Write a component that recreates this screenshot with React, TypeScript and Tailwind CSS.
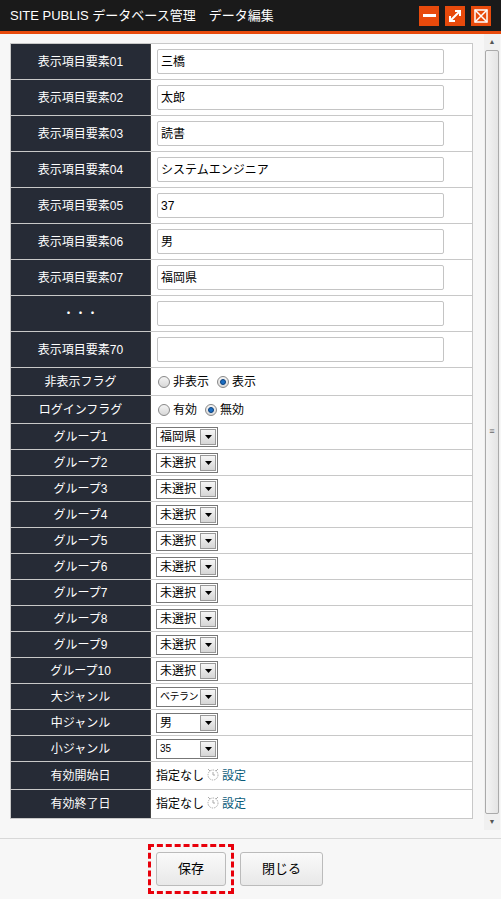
const font = { fontFamily: '"Liberation Sans", "Noto Sans CJK JP", sans-serif' };

const textRows: [string, string][] = [
  ['表示項目要素01', '三橋'],
  ['表示項目要素02', '太郎'],
  ['表示項目要素03', '読書'],
  ['表示項目要素04', 'システムエンジニア'],
  ['表示項目要素05', '37'],
  ['表示項目要素06', '男'],
  ['表示項目要素07', '福岡県'],
  ['・・・', ''],
  ['表示項目要素70', ''],
];

const selectRows: [string, string][] = [
  ['グループ1', '福岡県'],
  ['グループ2', '未選択'],
  ['グループ3', '未選択'],
  ['グループ4', '未選択'],
  ['グループ5', '未選択'],
  ['グループ6', '未選択'],
  ['グループ7', '未選択'],
  ['グループ8', '未選択'],
  ['グループ9', '未選択'],
  ['グループ10', '未選択'],
  ['大ジャンル', 'ベテラン'],
  ['中ジャンル', '男'],
  ['小ジャンル', '35'],
];

function Label({ children }: { children: React.ReactNode }) {
  return (
    <div className="w-[140px] shrink-0 bg-[#262b36] text-white text-[12px] flex items-center justify-center border-r border-[#444]">
      {children}
    </div>
  );
}

function Radio({ on }: { on?: boolean }) {
  return (
    <span className="inline-flex w-[12px] h-[12px] rounded-full border border-[#888] bg-gradient-to-b from-[#f4f4f4] to-[#d8d8d8] items-center justify-center mr-[3px]">
      {on && <span className="w-[6px] h-[6px] rounded-full bg-[#1b6fc4] border border-[#0b3e7a]" />}
    </span>
  );
}

function Select({ value }: { value: string }) {
  const size = value === '35' ? 'text-[10px]' : value === 'ベテラン' ? 'text-[10px] tracking-[-0.5px]' : '';
  return (
    <div className="w-[62px] h-[20px] border border-[#777] bg-white flex items-center text-[12px] text-black">
      <span className={`flex-1 pl-[3px] overflow-hidden whitespace-nowrap ${size}`}>{value}</span>
      <span className="w-[16px] h-[16px] mr-[1px] bg-gradient-to-b from-[#f6f6f6] to-[#d6d6d6] border border-[#999] flex items-center justify-center">
        <svg width="7" height="4" viewBox="0 0 7 4"><path d="M0 0h7L3.5 4z" fill="#000" /></svg>
      </span>
    </div>
  );
}

function DateCell() {
  return (
    <div className="flex items-center pl-[5px] text-[12px] text-black">
      指定なし
      <svg width="16" height="16" viewBox="0 0 16 16" className="mx-[1px] -mt-[4px]">
        <circle cx="8" cy="9" r="5" fill="none" stroke="#aaa" strokeWidth="1" strokeDasharray="1.5 1" />
        <path d="M8 6v3h2M3 3l2 2M13 3l-2 2" stroke="#aaa" fill="none" />
      </svg>
      <span className="text-[#0b5c7a]">設定</span>
    </div>
  );
}

export default function App() {
  return (
    <div style={font} className="w-[501px] h-[899px] bg-[#f7f7f7] flex flex-col overflow-hidden">
      <div className="h-[31px] bg-[#1a1a1a] flex items-center px-[10px] shrink-0">
        <span className="text-white text-[13px] flex-1">SITE PUBLIS データベース管理　データ編集</span>
        <div className="flex gap-[6px]">
          <span className="w-[20px] h-[20px] bg-[#e84a0c] flex items-center justify-center">
            <span className="w-[13px] h-[3px] bg-white" />
          </span>
          <span className="w-[20px] h-[20px] bg-[#e84a0c] flex items-center justify-center">
            <svg width="14" height="14" viewBox="0 0 14 14"><path d="M2 12L12 2M7 2h5v5M2 7v5h5" stroke="#fff" strokeWidth="2" fill="none" /></svg>
          </span>
          <span className="w-[20px] h-[20px] bg-[#e84a0c] flex items-center justify-center">
            <svg width="14" height="14" viewBox="0 0 14 14"><rect x="1" y="1" width="12" height="12" stroke="#fff" strokeWidth="1.5" fill="none" /><path d="M1 1l12 12M13 1L1 13" stroke="#fff" strokeWidth="1.5" /></svg>
          </span>
        </div>
      </div>
      <div className="h-[3px] bg-[#e84a0c] shrink-0" />
      <div className="flex h-[796px] shrink-0">
        <div className="flex-1 pl-[10px] pt-[9px]">
          <div className="w-[463px] border border-[#c8c8c8] bg-white">
            {textRows.map(([l, v]) => (
              <div key={l} className="flex h-[36px] border-b border-[#c8c8c8]">
                <Label>{l}</Label>
                <div className="flex-1 flex items-center pl-[6px]">
                  <div className="w-[287px] h-[25px] border border-[#c4c4c4] rounded-[2px] bg-white text-[12px] text-black flex items-center px-[3px]">{v}</div>
                </div>
              </div>
            ))}
            {[['非表示フラグ', '非表示', '表示'], ['ログインフラグ', '有効', '無効']].map(([l, a, b]) => (
              <div key={l} className="flex h-[28px] border-b border-[#c8c8c8]">
                <Label>{l}</Label>
                <div className="flex-1 flex items-center pl-[7px] text-[12px] text-black">
                  <Radio />{a}<span className="w-[8px]" /><Radio on />{b}
                </div>
              </div>
            ))}
            {selectRows.map(([l, v]) => (
              <div key={l} className="flex h-[26px] border-b border-[#c8c8c8]">
                <Label>{l}</Label>
                <div className="flex-1 flex items-center pl-[5px]"><Select value={v} /></div>
              </div>
            ))}
            {['有効開始日', '有効終了日'].map((l, i) => (
              <div key={l} className={`flex h-[28px] ${i === 0 ? 'border-b border-[#c8c8c8]' : ''}`}>
                <Label>{l}</Label>
                <DateCell />
              </div>
            ))}
          </div>
        </div>
        <div className="w-[16px] mr-[1px] bg-[#f0f0f0] flex flex-col items-center">
          <span className="h-[16px] flex items-center text-[7px] text-[#555]">▲</span>
          <div className="w-[14px] flex-1 bg-gradient-to-r from-[#f4f4f4] to-[#e4e4e4] border border-[#aaa] rounded-[2px] flex items-center justify-center text-[9px] text-[#666]">≡</div>
          <span className="h-[16px] flex items-center text-[7px] text-[#555]">▼</span>
        </div>
      </div>
      <div className="border-t border-[#d8d8d8] mt-[8px] flex justify-center gap-[6px] pt-[5px] pr-[30px]">
        <div className="border-[3px] border-dashed border-[#e8000b] p-[5px]">
          <button className="w-[70px] h-[34px] rounded-[3px] border border-[#bbb] bg-gradient-to-b from-[#fafafa] to-[#e8e8e8] text-[13px] text-black">保存</button>
        </div>
        <div className="pt-[8px]">
          <button className="w-[83px] h-[34px] rounded-[3px] border border-[#bbb] bg-gradient-to-b from-[#fafafa] to-[#e8e8e8] text-[13px] text-black">閉じる</button>
        </div>
      </div>
    </div>
  );
}
